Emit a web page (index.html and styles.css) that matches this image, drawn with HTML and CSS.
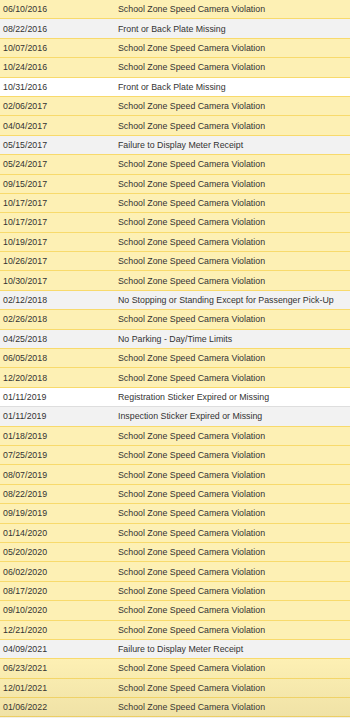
FILE: index.html
```html
<!DOCTYPE html>
<html>
<head>
<meta charset="utf-8">
<link rel="stylesheet" href="styles.css">
</head>
<body>
<div class="table">
  <div class="row hl"><span class="date">06/10/2016</span><span class="desc">School Zone Speed Camera Violation</span></div>
  <div class="row gray"><span class="date">08/22/2016</span><span class="desc">Front or Back Plate Missing</span></div>
  <div class="row hl"><span class="date">10/07/2016</span><span class="desc">School Zone Speed Camera Violation</span></div>
  <div class="row hl"><span class="date">10/24/2016</span><span class="desc">School Zone Speed Camera Violation</span></div>
  <div class="row white"><span class="date">10/31/2016</span><span class="desc">Front or Back Plate Missing</span></div>
  <div class="row hl"><span class="date">02/06/2017</span><span class="desc">School Zone Speed Camera Violation</span></div>
  <div class="row hl"><span class="date">04/04/2017</span><span class="desc">School Zone Speed Camera Violation</span></div>
  <div class="row gray"><span class="date">05/15/2017</span><span class="desc">Failure to Display Meter Receipt</span></div>
  <div class="row hl"><span class="date">05/24/2017</span><span class="desc">School Zone Speed Camera Violation</span></div>
  <div class="row hl"><span class="date">09/15/2017</span><span class="desc">School Zone Speed Camera Violation</span></div>
  <div class="row hl"><span class="date">10/17/2017</span><span class="desc">School Zone Speed Camera Violation</span></div>
  <div class="row hl"><span class="date">10/17/2017</span><span class="desc">School Zone Speed Camera Violation</span></div>
  <div class="row hl"><span class="date">10/19/2017</span><span class="desc">School Zone Speed Camera Violation</span></div>
  <div class="row hl"><span class="date">10/26/2017</span><span class="desc">School Zone Speed Camera Violation</span></div>
  <div class="row hl"><span class="date">10/30/2017</span><span class="desc">School Zone Speed Camera Violation</span></div>
  <div class="row gray"><span class="date">02/12/2018</span><span class="desc">No Stopping or Standing Except for Passenger Pick-Up</span></div>
  <div class="row hl"><span class="date">02/26/2018</span><span class="desc">School Zone Speed Camera Violation</span></div>
  <div class="row gray"><span class="date">04/25/2018</span><span class="desc">No Parking - Day/Time Limits</span></div>
  <div class="row hl"><span class="date">06/05/2018</span><span class="desc">School Zone Speed Camera Violation</span></div>
  <div class="row hl"><span class="date">12/20/2018</span><span class="desc">School Zone Speed Camera Violation</span></div>
  <div class="row white"><span class="date">01/11/2019</span><span class="desc">Registration Sticker Expired or Missing</span></div>
  <div class="row gray"><span class="date">01/11/2019</span><span class="desc">Inspection Sticker Expired or Missing</span></div>
  <div class="row hl"><span class="date">01/18/2019</span><span class="desc">School Zone Speed Camera Violation</span></div>
  <div class="row hl"><span class="date">07/25/2019</span><span class="desc">School Zone Speed Camera Violation</span></div>
  <div class="row hl"><span class="date">08/07/2019</span><span class="desc">School Zone Speed Camera Violation</span></div>
  <div class="row hl"><span class="date">08/22/2019</span><span class="desc">School Zone Speed Camera Violation</span></div>
  <div class="row hl"><span class="date">09/19/2019</span><span class="desc">School Zone Speed Camera Violation</span></div>
  <div class="row hl"><span class="date">01/14/2020</span><span class="desc">School Zone Speed Camera Violation</span></div>
  <div class="row hl"><span class="date">05/20/2020</span><span class="desc">School Zone Speed Camera Violation</span></div>
  <div class="row hl"><span class="date">06/02/2020</span><span class="desc">School Zone Speed Camera Violation</span></div>
  <div class="row hl"><span class="date">08/17/2020</span><span class="desc">School Zone Speed Camera Violation</span></div>
  <div class="row hl"><span class="date">09/10/2020</span><span class="desc">School Zone Speed Camera Violation</span></div>
  <div class="row hl"><span class="date">12/21/2020</span><span class="desc">School Zone Speed Camera Violation</span></div>
  <div class="row gray"><span class="date">04/09/2021</span><span class="desc">Failure to Display Meter Receipt</span></div>
  <div class="row hl"><span class="date">06/23/2021</span><span class="desc">School Zone Speed Camera Violation</span></div>
  <div class="row hl"><span class="date">12/01/2021</span><span class="desc">School Zone Speed Camera Violation</span></div>
  <div class="row hl"><span class="date">01/06/2022</span><span class="desc">School Zone Speed Camera Violation</span></div>
  <div class="shade"></div>
</div>
</body>
</html>
```
FILE: styles.css
```css
html, body {
  margin: 0;
  padding: 0;
  background: #ffffff;
}
.table {
  position: relative;
  width: 350px;
  height: 718px;
  overflow: hidden;
  font-family: "Liberation Sans", Arial, Helvetica, sans-serif;
  font-size: 8.8px;
  color: #333333;
}
.row {
  position: relative;
  display: flex;
  align-items: center;
  height: 18.4px;
  border-bottom: 1px solid #dedede;
  box-sizing: content-box;
}
.row.hl {
  background: #fdf0b4;
  border-bottom-color: #f8da6c;
  box-shadow: 0 -1px 0 #f8da6c;
  z-index: 1;
}
.row.gray {
  background: #f2f2f2;
}
.row.white {
  background: #ffffff;
}
.date {
  width: 115px;
  padding-left: 3px;
  flex: none;
}
.desc {
  white-space: nowrap;
}
.shade {
  position: absolute;
  left: 0;
  right: 0;
  bottom: 0;
  height: 60px;
  background: linear-gradient(to bottom, rgba(120, 100, 40, 0) 0%, rgba(120, 100, 40, 0.10) 100%);
  z-index: 2;
  pointer-events: none;
}
```
